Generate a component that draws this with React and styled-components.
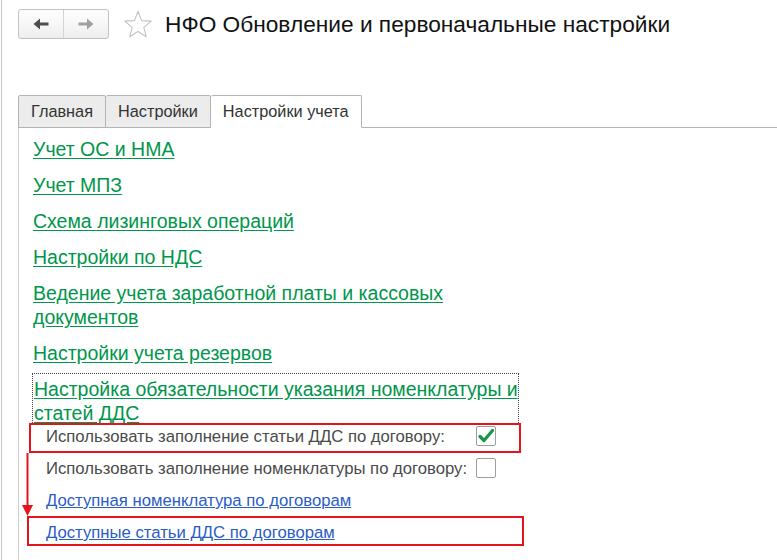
import React from "react";
import styled, { createGlobalStyle } from "styled-components";

const GlobalStyle = createGlobalStyle`
  html, body { margin: 0; padding: 0; background: #fff; }
  body { font-family: "Liberation Sans", Arial, sans-serif; }
  * { box-sizing: border-box; }
`;

const Page = styled.div`
  min-height: 560px;
  margin-left: 1px;
  border-left: 1px solid #c9c9c9;
  padding: 9px 0 0 16px;
  overflow: hidden;
`;

const Header = styled.div`
  display: flex;
  align-items: center;
  height: 30px;
`;

const NavGroup = styled.div`
  display: flex;
  width: 91px;
  height: 30px;
  border: 1px solid #c2c2c2;
  border-radius: 3px;
  background: linear-gradient(#ffffff, #eeeeee);
`;

const NavButton = styled.button`
  flex: 1;
  display: flex;
  align-items: center;
  justify-content: center;
  border: none;
  background: transparent;
  padding: 0;
  color: ${(p) => (p.$disabled ? "#a0a0a0" : "#4d4d4d")};
  & + & { border-left: 1px solid #d4d4d4; }
`;

const StarIcon = styled.svg`
  margin-left: 14px;
  flex: none;
`;

const Title = styled.h1`
  margin: 0 0 0 12px;
  font-size: 22.7px;
  font-weight: normal;
  color: #111;
  white-space: nowrap;
`;

const TabBar = styled.div`
  display: flex;
  margin-top: 56px;
  height: 33px;
  border-bottom: 1px solid #b3b3b3;
`;

const Tab = styled.div`
  display: flex;
  align-items: center;
  height: 33px;
  padding: 0 12px;
  font-size: 16.3px;
  color: #333;
  border: 1px solid #b3b3b3;
  border-left: ${(p) => (p.$first ? "1px solid #b3b3b3" : "none")};
  border-bottom: ${(p) => (p.$active ? "1px solid #fff" : "1px solid #b3b3b3")};
  border-radius: 2px 2px 0 0;
  background: ${(p) => (p.$active ? "#fff" : "#ececec")};
`;

const Panel = styled.div`
  border-left: 1px solid #cfcfcf;
  min-height: 440px;
  padding: 9px 0 0 14px;
`;

const LinkList = styled.div`
  display: flex;
  flex-direction: column;
  gap: 12px;
  width: 488px;
`;

const GreenLink = styled.a`
  display: block;
  font-size: 19.5px;
  line-height: 24px;
  color: #00964b;
  text-decoration: underline;
  text-underline-offset: 2px;
  cursor: pointer;
`;

const FocusBox = styled.div`
  margin: -4px 0 0 -1px;
  padding: 3px 0 0 1px;
  width: 487px;
  border: 1px dotted #444;
  border-bottom: none;
`;

const Section = styled.div`
  position: relative;
  width: 486px;
  margin-top: -4px;
`;

const Row = styled.div`
  position: relative;
  display: grid;
  grid-template-columns: 430px 20px;
  align-items: center;
  height: 32px;
  padding-left: 13px;
  font-size: 16.7px;
  color: #4a4a4a;
  &::after {
    content: "";
    display: ${(p) => (p.$mark ? "block" : "none")};
    position: absolute;
    left: ${(p) => p.$mark?.[0] ?? 0}px;
    right: ${(p) => p.$mark?.[1] ?? 0}px;
    top: ${(p) => p.$mark?.[2] ?? 0}px;
    bottom: ${(p) => p.$mark?.[3] ?? 0}px;
    border: 2px solid #e3141c;
    pointer-events: none;
  }
`;

const Checkbox = styled.span`
  display: flex;
  align-items: center;
  justify-content: center;
  width: 20px;
  height: 20px;
  border: 1px solid #9e9e9e;
  border-radius: 2px;
  background: #fff;
  margin-top: ${(p) => p.$offset || 0}px;
`;

const BlueLink = styled.a`
  font-size: 16.7px;
  color: #2a5cc6;
  text-decoration: underline;
  white-space: nowrap;
  cursor: pointer;
`;

const Arrow = styled.svg`
  position: absolute;
  left: -11px;
  top: 32px;
`;

const ArrowLeft = () => (
  <svg width="16" height="12" viewBox="0 0 16 12">
    <path d="M0.5 6 L7 0.5 V4.4 H15.5 V7.6 H7 V11.5 Z" fill="currentColor" />
  </svg>
);

const ArrowRight = () => (
  <svg width="16" height="12" viewBox="0 0 16 12">
    <path d="M15.5 6 L9 0.5 V4.4 H0.5 V7.6 H9 V11.5 Z" fill="currentColor" />
  </svg>
);

const greenLinks = [
  "Учет ОС и НМА",
  "Учет МПЗ",
  "Схема лизинговых операций",
  "Настройки по НДС",
  "Ведение учета заработной платы и кассовых документов",
  "Настройки учета резервов",
];

export default function App() {
  return (
    <>
      <GlobalStyle />
      <Page>
        <Header>
          <NavGroup>
            <NavButton aria-label="Назад"><ArrowLeft /></NavButton>
            <NavButton $disabled aria-label="Вперед"><ArrowRight /></NavButton>
          </NavGroup>
          <StarIcon width="30" height="29" viewBox="0 0 30 29">
            <path
              d="M15 1.5 L18.6 10.6 L28.3 11.1 L20.8 17.3 L23.3 26.8 L15 21.5 L6.7 26.8 L9.2 17.3 L1.7 11.1 L11.4 10.6 Z"
              fill="#fff"
              stroke="#c2c2c2"
              strokeWidth="1.1"
              strokeLinejoin="round"
            />
          </StarIcon>
          <Title>НФО Обновление и первоначальные настройки</Title>
        </Header>
        <TabBar>
          <Tab $first>Главная</Tab>
          <Tab>Настройки</Tab>
          <Tab $active>Настройки учета</Tab>
        </TabBar>
        <Panel>
          <LinkList>
            {greenLinks.map((t) => (
              <GreenLink key={t}>{t}</GreenLink>
            ))}
            <FocusBox>
              <GreenLink>Настройка обязательности указания номенклатуры и статей ДДС</GreenLink>
            </FocusBox>
          </LinkList>
          <Section>
            <Row $mark={[-4, -2, 2, 0]}>
              <span>Использовать заполнение статьи ДДС по договору:</span>
              <Checkbox $offset={-2}>
                <svg width="16" height="14" viewBox="0 0 16 14">
                  <path d="M2 7.5 L6 11.5 L14.5 1.5" fill="none" stroke="#149a45" strokeWidth="3.2" strokeLinecap="round" strokeLinejoin="round" />
                </svg>
              </Checkbox>
            </Row>
            <Row>
              <span>Использовать заполнение номенклатуры по договору:</span>
              <Checkbox $offset={-2} />
            </Row>
            <Row>
              <BlueLink>Доступная номенклатура по договорам</BlueLink>
            </Row>
            <Row $mark={[-6, -5, -1, 3]}>
              <BlueLink>Доступные статьи ДДС по договорам</BlueLink>
            </Row>
            <Arrow width="12" height="64" viewBox="0 0 12 64">
              <line x1="5.5" y1="0" x2="5.5" y2="54" stroke="#e3141c" strokeWidth="2" />
              <path d="M0 52 L11 52 L5.5 63 Z" fill="#e3141c" />
            </Arrow>
          </Section>
        </Panel>
      </Page>
    </>
  );
}
